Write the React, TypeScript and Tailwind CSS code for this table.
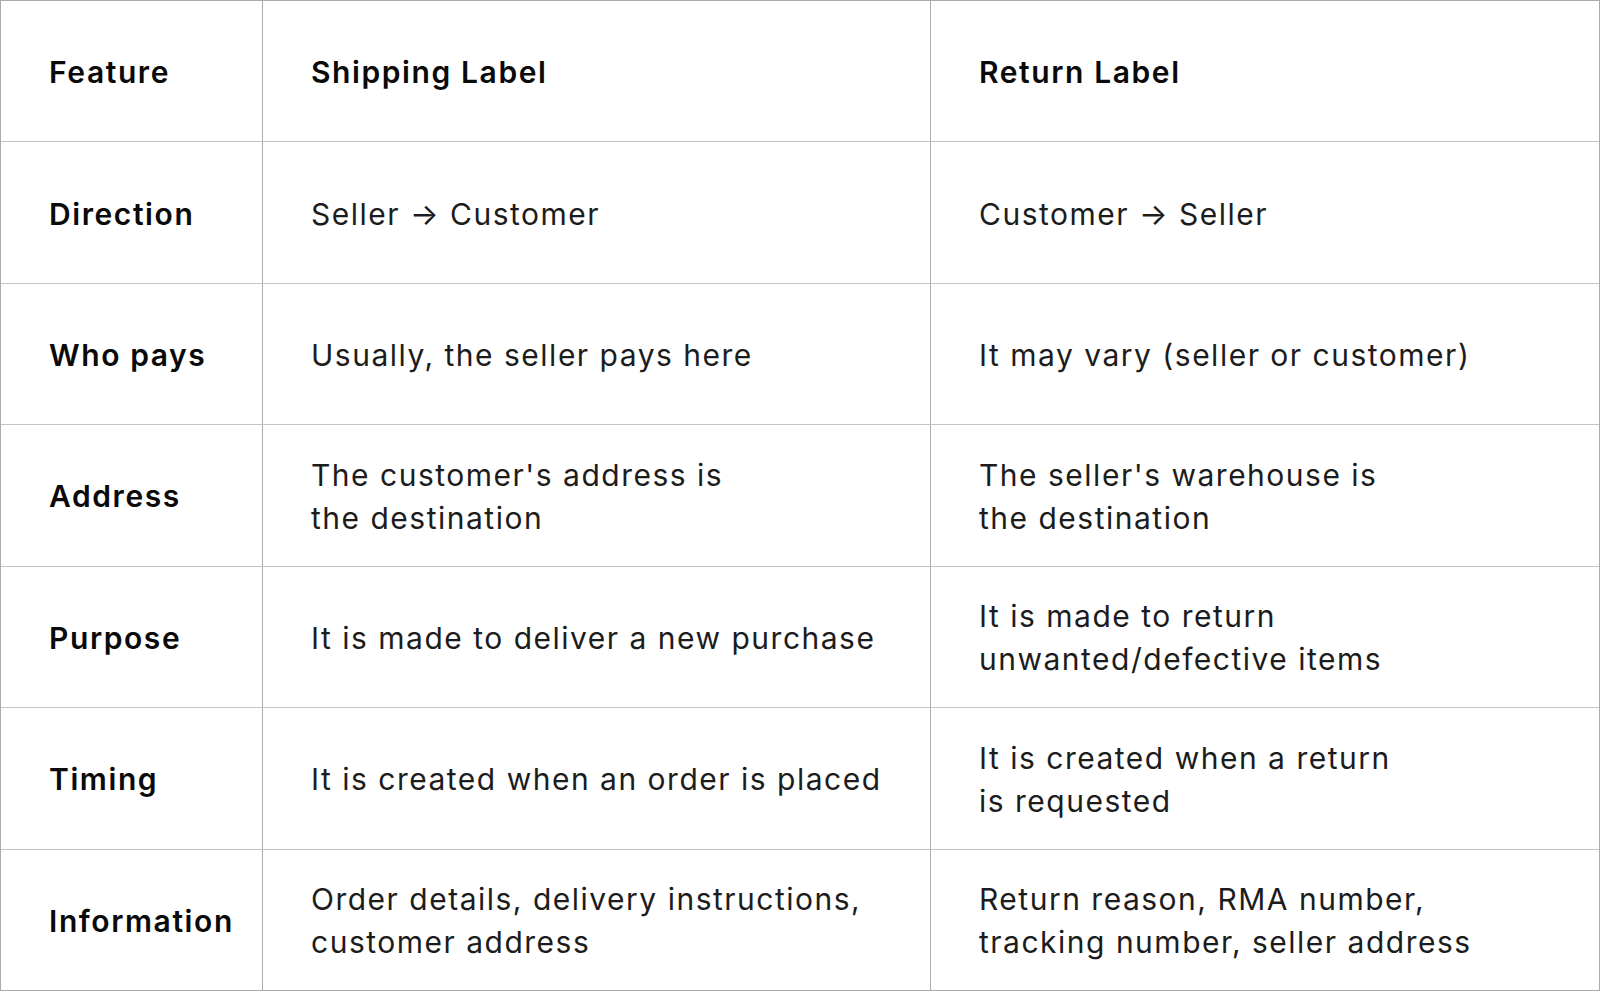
import React from "react";

const rows: { label: string; a: string[]; b: string[] }[] = [
  { label: "Direction", a: ["Seller → Customer"], b: ["Customer → Seller"] },
  { label: "Who pays", a: ["Usually, the seller pays here"], b: ["It may vary (seller or customer)"] },
  { label: "Address", a: ["The customer's address is", "the destination"], b: ["The seller's warehouse is", "the destination"] },
  { label: "Purpose", a: ["It is made to deliver a new purchase"], b: ["It is made to return", "unwanted/defective items"] },
  { label: "Timing", a: ["It is created when an order is placed"], b: ["It is created when a return", "is requested"] },
  { label: "Information", a: ["Order details, delivery instructions,", "customer address"], b: ["Return reason, RMA number,", "tracking number, seller address"] },
];

function Lines({ lines }: { lines: string[] }) {
  return (
    <div className="pt-[3px]">
      {lines.map((l, i) => (
        <div key={i}>{l}</div>
      ))}
    </div>
  );
}

const head = "flex items-center pl-[48px] pt-[3px] text-[30px] font-semibold tracking-[0.053em] text-[#0a0a0a]";
const body = "flex items-center pl-[48px] text-[30px] leading-[43px] tracking-[0.05em] text-[#1c1c1c]";

export default function App() {
  return (
    <div
      className="w-[1600px] h-[991px] bg-white border border-[#ababab] flex flex-col antialiased"
      style={{ fontFamily: "Inter, 'Liberation Sans', sans-serif" }}
    >
      <div className="flex-1 grid grid-cols-[262px_668px_1fr] border-b border-[#c4c4c4]">
        <div className={head + " border-r border-[#ababab]"}>Feature</div>
        <div className={head + " border-r border-[#ababab]"}>Shipping Label</div>
        <div className={head}>Return Label</div>
      </div>
      {rows.map((r, i) => (
        <div
          key={r.label}
          className={
            i === rows.length - 1
              ? "flex-1 grid grid-cols-[262px_668px_1fr]"
              : "flex-1 grid grid-cols-[262px_668px_1fr] border-b border-[#c4c4c4]"
          }
        >
          <div className={head + " border-r border-[#ababab]"}>{r.label}</div>
          <div className={body + " border-r border-[#ababab]"}>
            <Lines lines={r.a} />
          </div>
          <div className={body}>
            <Lines lines={r.b} />
          </div>
        </div>
      ))}
    </div>
  );
}
